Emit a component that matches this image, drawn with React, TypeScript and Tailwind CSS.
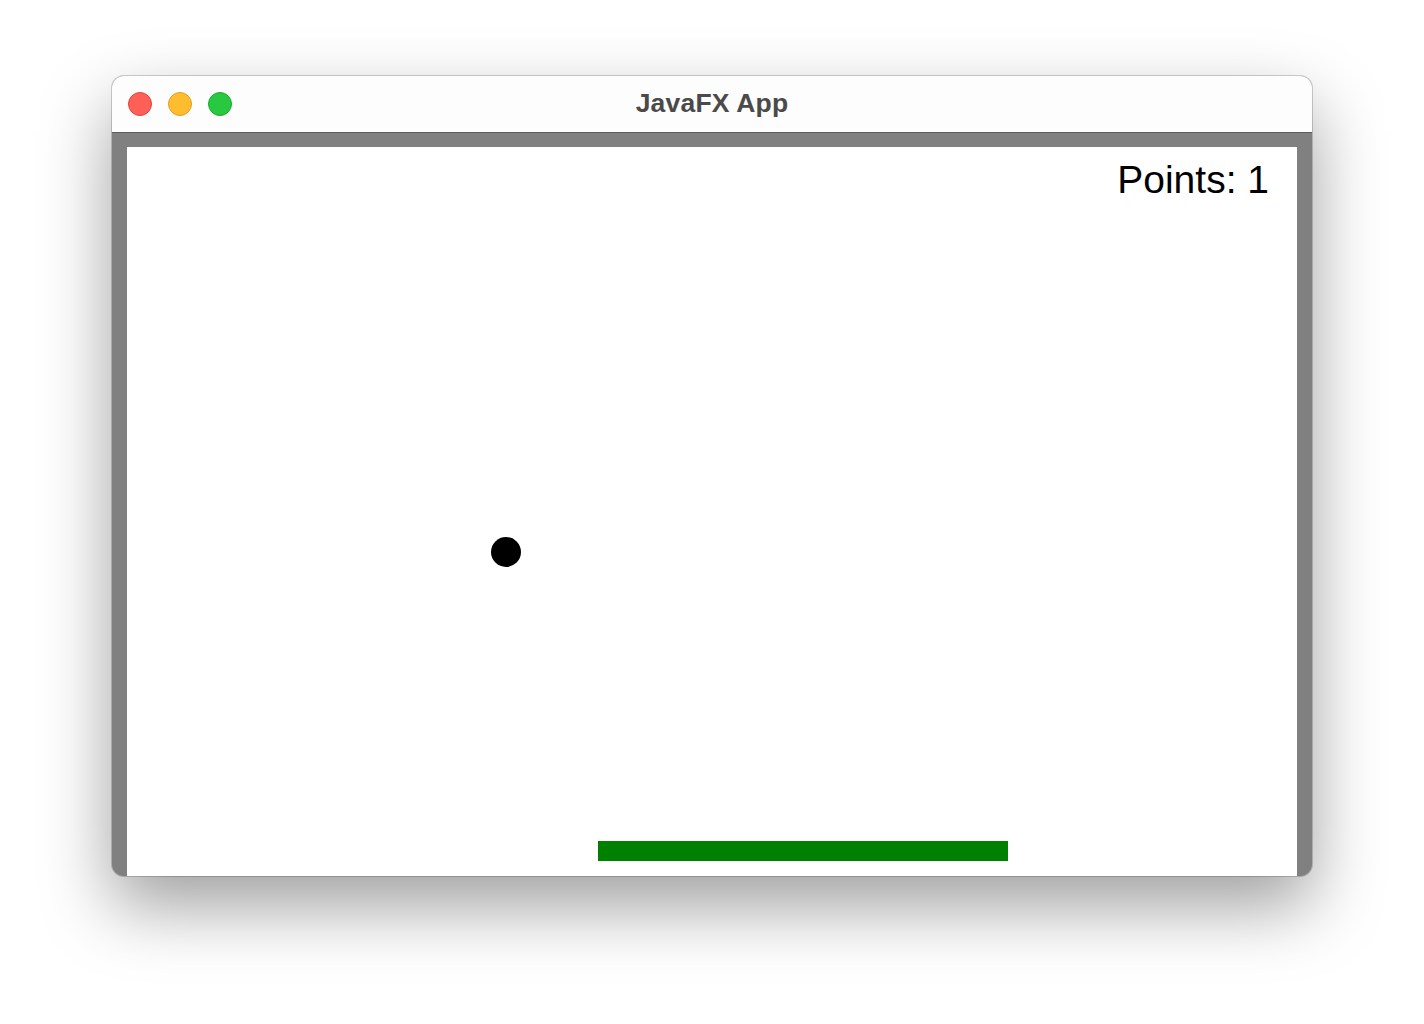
export default function App() {
  return (
    <div className="w-[1424px] h-[1024px] bg-white pt-[76px] pl-[112px]" style={{ fontFamily: '"Liberation Sans", Arial, sans-serif' }}>
      <div className="w-[1200px] h-[800px] rounded-[12px] overflow-hidden flex flex-col bg-[#808080] shadow-[0_30px_70px_rgba(0,0,0,0.38),0_0_0_1px_rgba(0,0,0,0.18)]">
        <div className="h-[57px] shrink-0 bg-[#fdfdfd] border-b border-[#5c5c5c] relative flex items-center justify-center">
          <div className="absolute left-[16px] top-[16px] flex gap-[16px]">
            <span className="w-[24px] h-[24px] rounded-full bg-[#fe5f57] border border-[#e0443e]" />
            <span className="w-[24px] h-[24px] rounded-full bg-[#febc2e] border border-[#dea123]" />
            <span className="w-[24px] h-[24px] rounded-full bg-[#28c840] border border-[#1aab29]" />
          </div>
          <span className="text-[26.5px] font-bold text-[#4a4a4a] leading-none mt-[-2px] tracking-[0.2px]">JavaFX App</span>
        </div>
        <div className="flex-1 px-[15px] pt-[14px] flex">
          <div className="flex-1 bg-white relative">
            <span className="absolute right-[28px] top-[9px] text-[39px] leading-[48px] text-black">Points: 1</span>
            <span className="absolute left-[364px] top-[390px] w-[30px] h-[30px] rounded-full bg-black" />
            <span className="absolute left-[471px] top-[694px] w-[410px] h-[20px] bg-[#008000]" />
          </div>
        </div>
      </div>
    </div>
  );
}
